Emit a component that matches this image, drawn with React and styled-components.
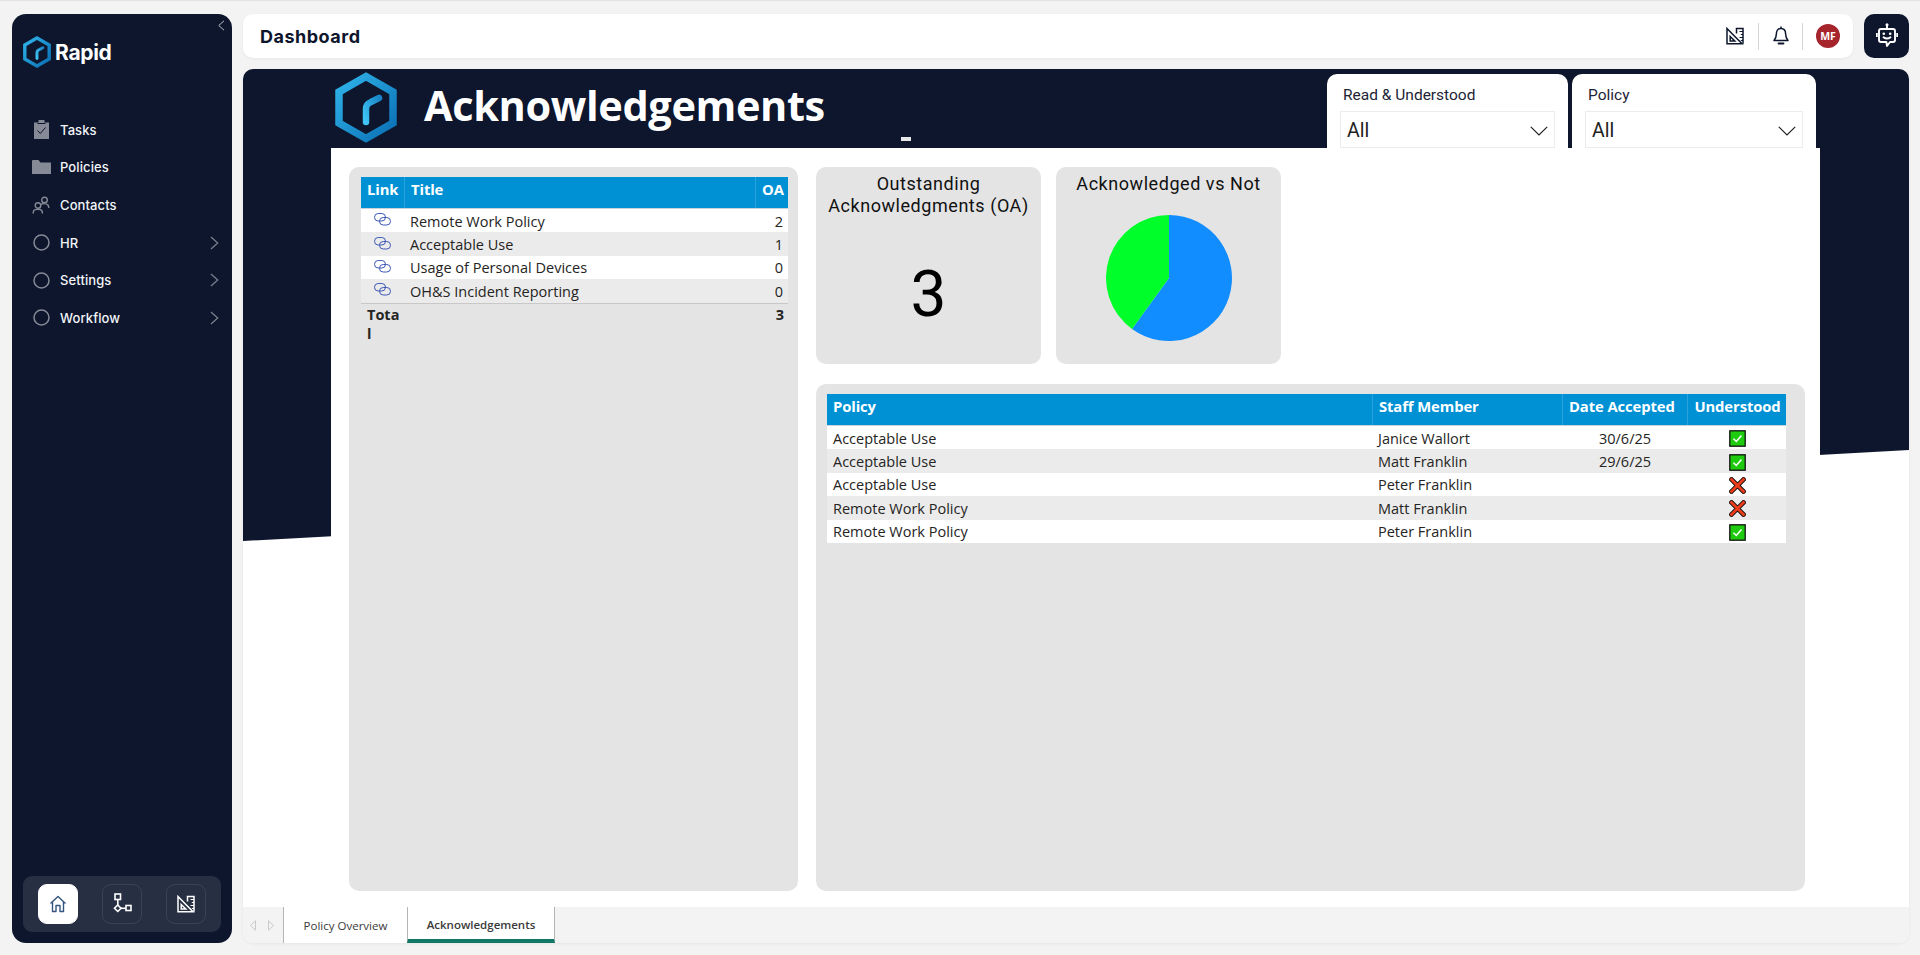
import React from "react";
import styled, { createGlobalStyle } from "styled-components";

const NAVY = "#0d162c";
const SEGOE = '"Open Sans", "Noto Sans", sans-serif';
const DIN = 'Roboto, "Liberation Sans", sans-serif';
const POPPINS = 'Inter, "Noto Sans", sans-serif';

const GlobalStyle = createGlobalStyle`
  html, body { margin: 0; padding: 0; height: 100%; background: #f3f3f3; }
  #root { height: 100%; }
  * { box-sizing: border-box; }
`;

const Page = styled.div`
  display: grid;
  grid-template-columns: 220px 1fr;
  gap: 11px;
  height: 955px;
  padding: 13px 11px 12px 12px;
  border-top: 1px solid #e2e2e2;
  background: #f3f3f3;
  overflow: hidden;
`;

/* sidebar */
const Sidebar = styled.aside`
  position: relative;
  display: flex;
  flex-direction: column;
  background: ${NAVY};
  border-radius: 14px;
  padding: 23px 11px 11px;
`;
const Collapse = styled.button`
  position: absolute;
  top: 5px;
  right: 5px;
  padding: 0;
  width: 12px;
  height: 12px;
  display: flex;
  align-items: center;
  justify-content: center;
  background: none;
  border: 0;
  color: #b9bec9;
`;
const Brand = styled.div`
  display: flex;
  align-items: center;
  gap: 4px;
  height: 31px;
  font-family: ${POPPINS};
  font-weight: 700;
  font-size: 21px;
  letter-spacing: -0.3px;
  color: #fff;
`;
const Nav = styled.nav`
  display: flex;
  flex-direction: column;
  margin-top: 43px;
`;
const NavItem = styled.div`
  display: flex;
  align-items: center;
  height: 37.6px;
  padding-left: 8px;
  font-family: ${POPPINS};
  font-size: 13px;
  font-weight: 500;
  letter-spacing: 0.1px;
  color: #f2f4f8;
`;
const NavIcon = styled.span`
  display: flex;
  align-items: center;
  justify-content: center;
  width: 20px;
  margin-right: 9px;
  color: #858a96;
`;
const NavArrow = styled.span`
  display: flex;
  margin-left: auto;
  margin-right: 2px;
  color: #7b808d;
`;
const SideFooter = styled.div`
  display: flex;
  align-items: center;
  justify-content: space-between;
  margin-top: auto;
  height: 56px;
  padding: 0 15px;
  background: #272f42;
  border-radius: 9px;
`;
const FooterButton = styled.button`
  display: flex;
  align-items: center;
  justify-content: center;
  width: 40px;
  height: 40px;
  padding: 0;
  border-radius: 9px;
  border: 1px solid ${(p) => (p.$active ? "#fff" : "#3a4256")};
  background: ${(p) => (p.$active ? "#fff" : "transparent")};
  color: ${(p) => (p.$active ? "#35557f" : "#fff")};
`;

/* right side */
const Main = styled.main`
  display: flex;
  flex-direction: column;
  gap: 11px;
  min-width: 0;
`;
const TopRow = styled.div`
  display: flex;
  gap: 11px;
  height: 44px;
`;
const TopBar = styled.header`
  flex: 1;
  display: flex;
  align-items: center;
  padding: 0 13px 0 17px;
  background: #fff;
  border-radius: 10px;
  box-shadow: 0 1px 3px rgba(0, 0, 0, 0.05);
`;
const PageName = styled.h1`
  margin: 0 auto 0 0;
  font-family: ${POPPINS};
  font-size: 18px;
  font-weight: 700;
  letter-spacing: 0.5px;
  color: ${NAVY};
`;
const TopIcon = styled.span`
  display: flex;
  align-items: center;
  justify-content: center;
  color: ${NAVY};
`;
const Divider = styled.span`
  width: 1px;
  height: 27px;
  margin: 0 ${(p) => p.$gap || 14}px;
  background: #d5d5d5;
`;
const Avatar = styled.span`
  display: flex;
  align-items: center;
  justify-content: center;
  width: 24px;
  height: 24px;
  border-radius: 50%;
  background: #a6252c;
  color: #fff;
  font-family: ${SEGOE};
  font-size: 10.5px;
  font-weight: 700;
`;
const BotButton = styled.button`
  display: flex;
  align-items: center;
  justify-content: center;
  width: 45px;
  padding: 0;
  border: 0;
  border-radius: 10px;
  background: ${NAVY};
  color: #fff;
`;

const ReportPanel = styled.section`
  position: relative;
  flex: 1;
  display: flex;
  flex-direction: column;
  min-height: 0;
  background: #fff;
  border-radius: 10px;
  overflow: hidden;
  box-shadow: 0 1px 3px rgba(0, 0, 0, 0.06);

  &::before {
    content: "";
    position: absolute;
    inset: 0 0 auto 0;
    height: 472px;
    background: ${NAVY};
    clip-path: polygon(0 0, 100% 0, 100% 381px, 0 472px);
  }
`;
const Banner = styled.div`
  position: relative;
  display: flex;
  align-items: center;
  height: 79px;
  padding: 0 93px 0 92px;
`;
const LogoSlot = styled.div`
  display: flex;
  margin-bottom: 2px;
`;
const ReportTitle = styled.h2`
  margin: 0 0 8px 27px;
  font-family: ${SEGOE};
  font-size: 41.5px;
  line-height: 56px;
  font-weight: 700;
  letter-spacing: -0.37px;
  color: #fff;
`;
const Grip = styled.span`
  position: absolute;
  left: 658px;
  bottom: 7px;
  width: 10px;
  height: 4px;
  background: #e8e8e8;
`;
const Filters = styled.div`
  display: flex;
  gap: 4px;
  align-self: flex-end;
  margin-left: auto;
  height: 74px;
`;
const FilterCard = styled.div`
  width: ${(p) => p.$width}px;
  padding: 10px 13px 0;
  background: #fff;
  border-radius: 10px 10px 0 0;
`;
const FilterLabel = styled.div`
  padding-left: 3px;
  height: 27px;
  font-family: ${DIN};
  font-size: 15.5px;
  line-height: 22px;
  color: #1d2435;
`;
const Select = styled.div`
  display: flex;
  align-items: center;
  justify-content: space-between;
  height: 37px;
  padding: 2px 6px 0 6px;
  border: 1px solid #ececec;
  font-family: ${DIN};
  font-size: 19.5px;
  color: #222;
`;

const Canvas = styled.div`
  position: relative;
  flex: 1;
  display: grid;
  grid-template-columns: 449px 1fr;
  gap: 18px;
  min-height: 0;
  margin: 0 89px 0 88px;
  padding: 19px 15px 16px 18px;
  background: #fff;
`;
const Card = styled.div`
  background: #e4e4e4;
  border-radius: 10px;
`;
const TableCard = styled(Card)`
  padding: 10px 10px 10px 12px;
`;
const RightColumn = styled.div`
  display: flex;
  flex-direction: column;
  gap: 20px;
  min-width: 0;
`;
const StatRow = styled.div`
  display: flex;
  gap: 15px;
  height: 197px;
`;
const StatCard = styled(Card)`
  display: flex;
  flex-direction: column;
  align-items: center;
  width: 225px;
  padding-top: 6px;
`;
const StatTitle = styled.div`
  font-family: ${DIN};
  font-size: 18px;
  line-height: 22px;
  letter-spacing: 0.55px;
  text-align: center;
  color: #111;
`;
const StatValue = styled.div`
  flex: 1;
  display: flex;
  align-items: center;
  padding-top: 7px;
  font-family: ${DIN};
  font-size: 64px;
  color: #000;
`;
const PieHolder = styled.div`
  margin-top: 20px;
`;
const DetailCard = styled(Card)`
  flex: 1;
  padding: 10px 19px 10px 11px;
`;

/* tables */
const HeadRow = styled.div`
  display: grid;
  grid-template-columns: ${(p) => p.$columns};
  height: 32px;
  background: #0091d5;
  border-bottom: 1px solid #c9d3d9;
  font-family: ${SEGOE};
  font-size: 14.8px;
  font-weight: 700;
  letter-spacing: -0.1px;
  color: #fff;
`;
const HeadCell = styled.div`
  padding: 2px ${(p) => p.$right || 5}px 0 6px;
  text-align: ${(p) => p.$align || "left"};
  border-left: ${(p) => (p.$first ? "0" : "1px solid #2aa3dc")};
  white-space: nowrap;
`;
const Row = styled.div`
  display: grid;
  grid-template-columns: ${(p) => p.$columns};
  height: ${(p) => p.$height || 23.4}px;
  background: ${(p) => (p.$odd ? "#ebebeb" : "#fff")};
  font-family: ${SEGOE};
  font-size: 14.5px;
  line-height: 22px;
  color: #252423;
`;
const Cell = styled.div`
  display: flex;
  align-items: center;
  justify-content: ${(p) => p.$justify || "flex-start"};
  padding: 2px 5px 0 6px;
  white-space: nowrap;
  overflow: hidden;
`;
const LinkCell = styled(Cell)`
  padding: 0 0 2px;
`;
const TotalRow = styled.div`
  display: grid;
  grid-template-columns: ${(p) => p.$columns};
  border-top: 1px solid #c8c8c8;
  padding-top: 1px;
  font-family: ${SEGOE};
  font-size: 14.5px;
  line-height: 19px;
  font-weight: 700;
  color: #252423;
`;
const TotalCell = styled.div`
  padding: 0 4px 0 6px;
  text-align: ${(p) => p.$align || "left"};
  word-break: break-all;
`;

/* tab strip */
const TabStrip = styled.div`
  position: relative;
  display: flex;
  height: 36px;
  background: #f3f3f3;
`;
const TabArrows = styled.div`
  display: flex;
  align-items: center;
  gap: 12px;
  width: 40px;
  padding-left: 7px;
  color: #c9c9c9;
`;
const Tab = styled.div`
  display: flex;
  align-items: center;
  justify-content: center;
  width: ${(p) => p.$width}px;
  padding-top: ${(p) => (p.$active ? 3 : 1)}px;
  background: #fff;
  border-left: 1px solid #b5b5b5;
  border-right: ${(p) => (p.$active ? "1px solid #b5b5b5" : "0")};
  border-bottom: ${(p) => (p.$active ? "4px solid #117865" : "0")};
  font-family: ${SEGOE};
  font-size: 11.5px;
  font-weight: ${(p) => (p.$active ? 600 : 400)};
  color: #3a3a3a;
`;

/* icons */
const HexLogo = ({ size = 62, id = "hex" }) => (
  <svg width={size} height={size * 71 / 62} viewBox="0 0 62 71">
    <defs>
      <linearGradient id={`${id}-a`} x1="0" y1="0" x2="1" y2="1">
        <stop offset="0" stopColor="#30b4ea" />
        <stop offset="1" stopColor="#0a6fb4" />
      </linearGradient>
      <linearGradient id={`${id}-b`} x1="0" y1="1" x2="1" y2="0">
        <stop offset="0" stopColor="#3ec5f5" />
        <stop offset="1" stopColor="#1a86c9" />
      </linearGradient>
    </defs>
    <path d="M31 4.500 58 20V51L31 66.500 4 51V20Z" fill="none" stroke={`url(#${id}-a)`} strokeWidth="7.500" />
    <path d="M31 50V37Q31 32 36 30L44 26" fill="none" stroke={`url(#${id}-b)`} strokeWidth="6.500" strokeLinecap="round" />
  </svg>
);

const RulerIcon = ({ size = 18 }) => (
  <svg width={size} height={size} viewBox="0 0 18 18" fill="none" stroke="currentColor" strokeWidth="1.500">
    <path d="M1 1.500 16 16.800H1Z" />
    <path d="M4.200 9.500 8.800 14H4.200Z" />
    <path d="M10.500 6.500V1.500H17V16.800" />
    <path d="M13.500 4.500H17M14.800 7.500H17M13.500 10.500H17M14.800 13.500H17" strokeWidth="1.100" />
  </svg>
);

const FlowIcon = () => (
  <svg width="19" height="23" viewBox="0 0 19 23" fill="none" stroke="currentColor" strokeWidth="1.600">
    <rect x="2" y="1" width="5.500" height="5.500" />
    <path d="M4.800 6.500V12" />
    <path d="M4.800 12 8 15.300 4.800 18.500 1.500 15.300Z" />
    <path d="M8 15.300H13" />
    <rect x="13" y="12.500" width="5" height="5" />
  </svg>
);

const HomeIcon = () => (
  <svg width="18" height="18" viewBox="0 0 18 18" fill="none" stroke="currentColor" strokeWidth="1.400" strokeLinejoin="round">
    <path d="M1.500 8.500 9 1.500l7.500 7" />
    <path d="M3.500 7v9.500h3.500V10.500h4v6h3.500V7" />
  </svg>
);

const BellIcon = () => (
  <svg width="16" height="20" viewBox="0 0 16 20" fill="none" stroke="currentColor" strokeWidth="1.500">
    <path d="M8 2.500c3 0 4.600 2.200 4.600 5.300 0 3.600 1.100 5.200 2.400 6.700H1c1.300-1.500 2.400-3.100 2.400-6.700C3.400 4.700 5 2.500 8 2.500Z" strokeLinejoin="round" />
    <path d="M8 .5v2" />
    <path d="M5.600 17.500h4.800" strokeWidth="2" strokeLinecap="round" />
  </svg>
);

const BotIcon = () => (
  <svg width="22" height="26" viewBox="0 0 22 26" fill="none" stroke="currentColor" strokeWidth="1.900" strokeLinejoin="round">
    <circle cx="11" cy="1.800" r="1.500" fill="currentColor" stroke="none" />
    <path d="M11 3v3" />
    <path d="M5 6h12a2 2 0 0 1 2 2v9a2 2 0 0 1-2 2h-3l-3 4-.6-4H5a2 2 0 0 1-2-2V8a2 2 0 0 1 2-2Z" />
    <path d="M.8 10v4M21.200 10v4" />
    <circle cx="7.800" cy="10.800" r="1.300" fill="currentColor" stroke="none" />
    <circle cx="14.200" cy="10.800" r="1.300" fill="currentColor" stroke="none" />
    <path d="M7.500 14.200q3.500 2.600 7 0" strokeLinecap="round" />
  </svg>
);

const TasksIcon = () => (
  <svg width="15" height="19" viewBox="0 0 15 19">
    <path fill="currentColor" d="M0 2.500h4.500V1a3 3 0 0 1 6 0v1.500H15V19H0Z" />
    <path fill="none" stroke="#0d162c" strokeWidth="1" d="M3.500 10.500 6.300 13.500 11.500 7.500M3.500 3.500h8" />
  </svg>
);

const FolderIcon = () => (
  <svg width="19" height="14" viewBox="0 0 19 14">
    <path fill="currentColor" d="M0 1a1 1 0 0 1 1-1h5.500l2 2.500H19V14H0Z" />
  </svg>
);

const ContactsIcon = () => (
  <svg width="18" height="18" viewBox="0 0 18 18" fill="none" stroke="currentColor" strokeWidth="1.400">
    <circle cx="12.500" cy="4" r="2.800" />
    <path d="M9 8.500c1-1 5-1.500 7 .5l1 3" />
    <circle cx="6" cy="9.500" r="2.800" />
    <path d="M1 17.500l.8-3c.6-1.500 7-1.500 8 0l.8 3" />
  </svg>
);

const RingIcon = () => (
  <svg width="17" height="17" viewBox="0 0 17 17" fill="none" stroke="currentColor" strokeWidth="1.500">
    <circle cx="8.500" cy="8.500" r="7.500" />
  </svg>
);

const Chevron = ({ dir = "right", size = 14 }) => (
  <svg width={size * 0.62} height={size} viewBox="0 0 9 14" fill="none" stroke="currentColor" strokeWidth="1.300">
    <path d={dir === "right" ? "M1 .800 8 7 1 13.200" : "M8 .800 1 7 8 13.200"} />
  </svg>
);

const SelectChevron = () => (
  <svg width="18" height="10" viewBox="0 0 18 10" fill="none" stroke="#222" strokeWidth="1.200">
    <path d="M.8.800 9 9l8.200-8.200" />
  </svg>
);

const LinkIcon = () => (
  <svg width="17" height="13" viewBox="0 0 17 13" fill="none" stroke="#3d57b5" strokeWidth="1">
    <rect x=".5" y=".5" width="11" height="7.500" rx="3.700" />
    <rect x="5.500" y="4.500" width="11" height="7.500" rx="3.700" />
  </svg>
);

const TickBox = () => (
  <svg width="17" height="17" viewBox="0 0 17 17">
    <rect x=".8" y=".8" width="15.400" height="15.400" fill="#1fcb0f" stroke="#111" strokeWidth="1.300" />
    <path d="M4.500 8.800 7.300 11.500 12.500 5.500" fill="none" stroke="#fff" strokeWidth="1.500" />
  </svg>
);

const CrossMark = () => (
  <svg width="17" height="17" viewBox="0 0 17 17">
    <path d="M2.500 2.500 14.500 14.500M14.500 2.500 2.500 14.500" stroke="#111" strokeWidth="4.600" strokeLinecap="square" />
    <path d="M2.500 2.500 14.500 14.500M14.500 2.500 2.500 14.500" stroke="#ef3d1b" strokeWidth="2.800" strokeLinecap="square" />
  </svg>
);

const TabArrow = ({ flip }) => (
  <svg width="6" height="11" viewBox="0 0 6 11" fill="none" stroke="currentColor">
    <path d={flip ? "M.5.800 5.500 5.500.5 10.200Z" : "M5.500.800.5 5.500 5.500 10.200Z"} />
  </svg>
);

const Pie = () => (
  <svg width="126" height="126" viewBox="0 0 126 126">
    <path fill="#118dff" d="M63 63V0A63 63 0 1 1 26 114Z" />
    <path fill="#00ff2a" d="M63 63 26 114A63 63 0 0 1 63 0Z" />
  </svg>
);

const navItems = [
  { label: "Tasks", icon: <TasksIcon /> },
  { label: "Policies", icon: <FolderIcon /> },
  { label: "Contacts", icon: <ContactsIcon /> },
  { label: "HR", icon: <RingIcon />, more: true },
  { label: "Settings", icon: <RingIcon />, more: true },
  { label: "Workflow", icon: <RingIcon />, more: true },
];

const policyColumns = "43px 351px 1fr";
const policyRows = [
  ["Remote Work Policy", 2],
  ["Acceptable Use", 1],
  ["Usage of Personal Devices", 0],
  ["OH&S Incident Reporting", 0],
];

const staffColumns = "545px 190px 125px 1fr";
const staffRows = [
  ["Acceptable Use", "Janice Wallort", "30/6/25", true],
  ["Acceptable Use", "Matt Franklin", "29/6/25", true],
  ["Acceptable Use", "Peter Franklin", "", false],
  ["Remote Work Policy", "Matt Franklin", "", false],
  ["Remote Work Policy", "Peter Franklin", "", true],
];

export default function App() {
  return (
    <>
      <GlobalStyle />
      <Page>
        <Sidebar>
          <Collapse><Chevron dir="left" size={11} /></Collapse>
          <Brand>
            <HexLogo size={28} id="brand" />
            Rapid
          </Brand>
          <Nav>
            {navItems.map((item) => (
              <NavItem key={item.label}>
                <NavIcon>{item.icon}</NavIcon>
                {item.label}
                {item.more && <NavArrow><Chevron size={14} /></NavArrow>}
              </NavItem>
            ))}
          </Nav>
          <SideFooter>
            <FooterButton $active><HomeIcon /></FooterButton>
            <FooterButton><FlowIcon /></FooterButton>
            <FooterButton><RulerIcon /></FooterButton>
          </SideFooter>
        </Sidebar>

        <Main>
          <TopRow>
            <TopBar>
              <PageName>Dashboard</PageName>
              <TopIcon><RulerIcon /></TopIcon>
              <Divider $gap={14} />
              <TopIcon><BellIcon /></TopIcon>
              <Divider $gap={13} />
              <Avatar>MF</Avatar>
            </TopBar>
            <BotButton><BotIcon /></BotButton>
          </TopRow>

          <ReportPanel>
            <Banner>
              <LogoSlot><HexLogo id="report" /></LogoSlot>
              <ReportTitle>Acknowledgements</ReportTitle>
              <Grip />
              <Filters>
                <FilterCard $width={241}>
                  <FilterLabel>Read &amp; Understood</FilterLabel>
                  <Select>All<SelectChevron /></Select>
                </FilterCard>
                <FilterCard $width={244}>
                  <FilterLabel>Policy</FilterLabel>
                  <Select>All<SelectChevron /></Select>
                </FilterCard>
              </Filters>
            </Banner>

            <Canvas>
              <TableCard>
                <HeadRow $columns={policyColumns}>
                  <HeadCell $first>Link</HeadCell>
                  <HeadCell>Title</HeadCell>
                  <HeadCell $align="right">OA</HeadCell>
                </HeadRow>
                {policyRows.map(([title, count], i) => (
                  <Row key={title} $columns={policyColumns} $odd={i % 2 === 1}>
                    <LinkCell $justify="center"><LinkIcon /></LinkCell>
                    <Cell>{title}</Cell>
                    <Cell $justify="flex-end">{count}</Cell>
                  </Row>
                ))}
                <TotalRow $columns={policyColumns}>
                  <TotalCell>Total</TotalCell>
                  <TotalCell />
                  <TotalCell $align="right">3</TotalCell>
                </TotalRow>
              </TableCard>

              <RightColumn>
                <StatRow>
                  <StatCard>
                    <StatTitle>Outstanding<br />Acknowledgments (OA)</StatTitle>
                    <StatValue>3</StatValue>
                  </StatCard>
                  <StatCard>
                    <StatTitle>Acknowledged vs Not</StatTitle>
                    <PieHolder><Pie /></PieHolder>
                  </StatCard>
                </StatRow>
                <DetailCard>
                  <HeadRow $columns={staffColumns}>
                    <HeadCell $first>Policy</HeadCell>
                    <HeadCell>Staff Member</HeadCell>
                    <HeadCell $align="center" $right={14}>Date Accepted</HeadCell>
                    <HeadCell $align="center">Understood</HeadCell>
                  </HeadRow>
                  {staffRows.map(([policy, staff, date, ok], i) => (
                    <Row key={policy + staff} $columns={staffColumns} $odd={i % 2 === 1}>
                      <Cell>{policy}</Cell>
                      <Cell>{staff}</Cell>
                      <Cell $justify="center">{date}</Cell>
                      <Cell $justify="center">{ok ? <TickBox /> : <CrossMark />}</Cell>
                    </Row>
                  ))}
                </DetailCard>
              </RightColumn>
            </Canvas>

            <TabStrip>
              <TabArrows><TabArrow /><TabArrow flip /></TabArrows>
              <Tab $width={124}>Policy Overview</Tab>
              <Tab $width={148} $active>Acknowledgements</Tab>
            </TabStrip>
          </ReportPanel>
        </Main>
      </Page>
    </>
  );
}
